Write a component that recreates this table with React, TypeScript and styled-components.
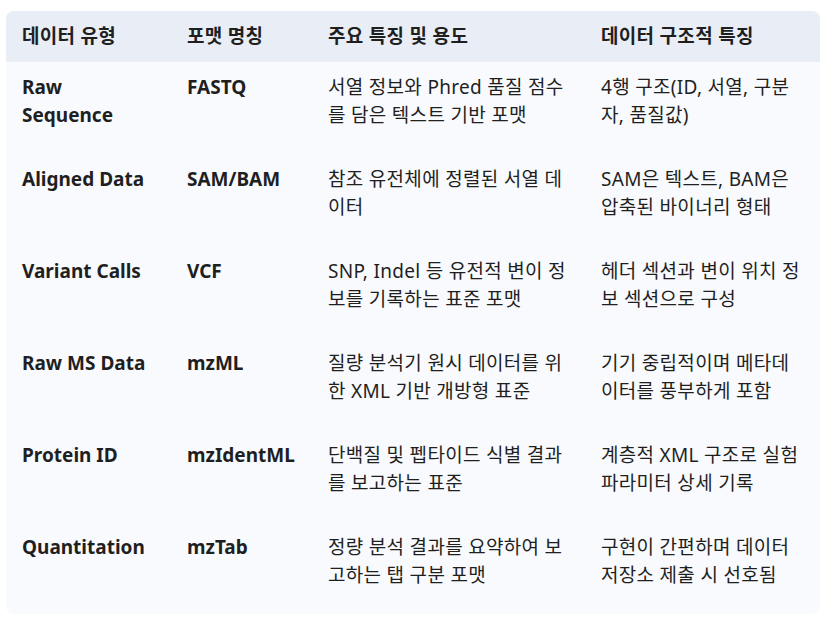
import React from 'react';
import styled, { createGlobalStyle } from 'styled-components';

const GlobalStyle = createGlobalStyle`
    html, body {
        margin: 0;
        padding: 0;
        background: #ffffff;
    }
    body {
        font-family: 'Noto Sans', 'Noto Sans CJK KR', sans-serif;
        color: #1f1f1f;
    }
`;

const Page = styled.div`
    padding: 11px 3px 8px 6px;
`;

const Table = styled.table`
    width: 814px;
    border-collapse: separate;
    border-spacing: 0;
    table-layout: fixed;
    background: #f8fafd;
    border-radius: 8px;
    overflow: hidden;
    font-size: 19px;
    line-height: 28px;
    letter-spacing: 0.3px;
`;

const HeadRow = styled.tr`
    background: #e9eef6;
`;

const HeadCell = styled.th`
    text-align: left;
    font-weight: 700;
    padding: 11px 16px 12px;
    vertical-align: top;
`;

const Cell = styled.td<{ $strong?: boolean }>`
    vertical-align: top;
    padding: 11px 16px 25px;
    font-weight: ${(props) => (props.$strong ? 700 : 400)};
    letter-spacing: ${(props) => (props.$strong ? '0' : '0.3px')};
`;

const rows = [
    ['Raw Sequence', 'FASTQ', '서열 정보와 Phred 품질 점수를 담은 텍스트 기반 포맷', '4행 구조(ID, 서열, 구분자, 품질값)'],
    ['Aligned Data', 'SAM/BAM', '참조 유전체에 정렬된 서열 데이터', 'SAM은 텍스트, BAM은 압축된 바이너리 형태'],
    ['Variant Calls', 'VCF', 'SNP, Indel 등 유전적 변이 정보를 기록하는 표준 포맷', '헤더 섹션과 변이 위치 정보 섹션으로 구성'],
    ['Raw MS Data', 'mzML', '질량 분석기 원시 데이터를 위한 XML 기반 개방형 표준', '기기 중립적이며 메타데이터를 풍부하게 포함'],
    ['Protein ID', 'mzIdentML', '단백질 및 펩타이드 식별 결과를 보고하는 표준', '계층적 XML 구조로 실험 파라미터 상세 기록'],
    ['Quantitation', 'mzTab', '정량 분석 결과를 요약하여 보고하는 탭 구분 포맷', '구현이 간편하며 데이터 저장소 제출 시 선호됨'],
];

export default function App() {
    return (
        <Page>
            <GlobalStyle />
            <Table>
                <colgroup>
                    <col style={{ width: 165 }} />
                    <col style={{ width: 141 }} />
                    <col style={{ width: 273 }} />
                    <col style={{ width: 235 }} />
                </colgroup>
                <thead>
                    <HeadRow>
                        <HeadCell>데이터 유형</HeadCell>
                        <HeadCell>포맷 명칭</HeadCell>
                        <HeadCell>주요 특징 및 용도</HeadCell>
                        <HeadCell>데이터 구조적 특징</HeadCell>
                    </HeadRow>
                </thead>
                <tbody>
                    {rows.map((r) => (
                        <tr key={r[1]}>
                            <Cell $strong>{r[0]}</Cell>
                            <Cell $strong>{r[1]}</Cell>
                            <Cell>{r[2]}</Cell>
                            <Cell>{r[3]}</Cell>
                        </tr>
                    ))}
                </tbody>
            </Table>
        </Page>
    );
}
